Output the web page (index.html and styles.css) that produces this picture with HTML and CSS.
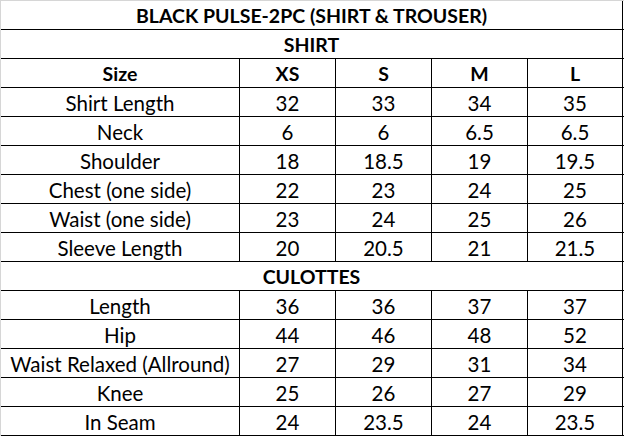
FILE: index.html
```html
<!DOCTYPE html>
<html>
<head>
<meta charset="utf-8">
<link rel="stylesheet" href="styles.css">
</head>
<body>
<div class="sheet">
  <div class="row span bold"><div class="cell">BLACK PULSE-2PC (SHIRT &amp; TROUSER)</div></div>
  <div class="row span bold"><div class="cell">SHIRT</div></div>
  <div class="row bold"><div class="cell">Size</div><div class="cell">XS</div><div class="cell">S</div><div class="cell">M</div><div class="cell">L</div></div>
  <div class="row"><div class="cell">Shirt Length</div><div class="cell">32</div><div class="cell">33</div><div class="cell">34</div><div class="cell">35</div></div>
  <div class="row"><div class="cell">Neck</div><div class="cell">6</div><div class="cell">6</div><div class="cell">6.5</div><div class="cell">6.5</div></div>
  <div class="row"><div class="cell">Shoulder</div><div class="cell">18</div><div class="cell">18.5</div><div class="cell">19</div><div class="cell">19.5</div></div>
  <div class="row"><div class="cell">Chest (one side)</div><div class="cell">22</div><div class="cell">23</div><div class="cell">24</div><div class="cell">25</div></div>
  <div class="row"><div class="cell">Waist (one side)</div><div class="cell">23</div><div class="cell">24</div><div class="cell">25</div><div class="cell">26</div></div>
  <div class="row"><div class="cell">Sleeve Length</div><div class="cell">20</div><div class="cell">20.5</div><div class="cell">21</div><div class="cell">21.5</div></div>
  <div class="row span bold"><div class="cell">CULOTTES</div></div>
  <div class="row"><div class="cell">Length</div><div class="cell">36</div><div class="cell">36</div><div class="cell">37</div><div class="cell">37</div></div>
  <div class="row"><div class="cell">Hip</div><div class="cell">44</div><div class="cell">46</div><div class="cell">48</div><div class="cell">52</div></div>
  <div class="row"><div class="cell">Waist Relaxed (Allround)</div><div class="cell">27</div><div class="cell">29</div><div class="cell">31</div><div class="cell">34</div></div>
  <div class="row"><div class="cell">Knee</div><div class="cell">25</div><div class="cell">26</div><div class="cell">27</div><div class="cell">29</div></div>
  <div class="row"><div class="cell">In Seam</div><div class="cell">24</div><div class="cell">23.5</div><div class="cell">24</div><div class="cell">23.5</div></div>
</div>
</body>
</html>
```
FILE: styles.css
```css
html, body {
  margin: 0;
  padding: 0;
  background: #ffffff;
}
.sheet {
  width: 623px;
  border-top: 1px solid #d6d6d6;
  border-left: 1px solid #d6d6d6;
  font-family: Lato, "Liberation Sans", sans-serif;
  font-size: 20.5px;
  color: #000;
}
.row {
  display: grid;
  grid-template-columns: 239px 96px 96px 96px 95px;
  height: 29px;
  box-sizing: border-box;
  border-bottom: 1px solid #000;
}
.row.span {
  grid-template-columns: 622px;
}
.cell {
  box-sizing: border-box;
  border-right: 1px solid #000;
  text-align: center;
  line-height: 28px;
  padding-top: 1px;
  white-space: nowrap;
  overflow: hidden;
}
.bold {
  font-weight: bold;
  font-size: 19.5px;
}
```
